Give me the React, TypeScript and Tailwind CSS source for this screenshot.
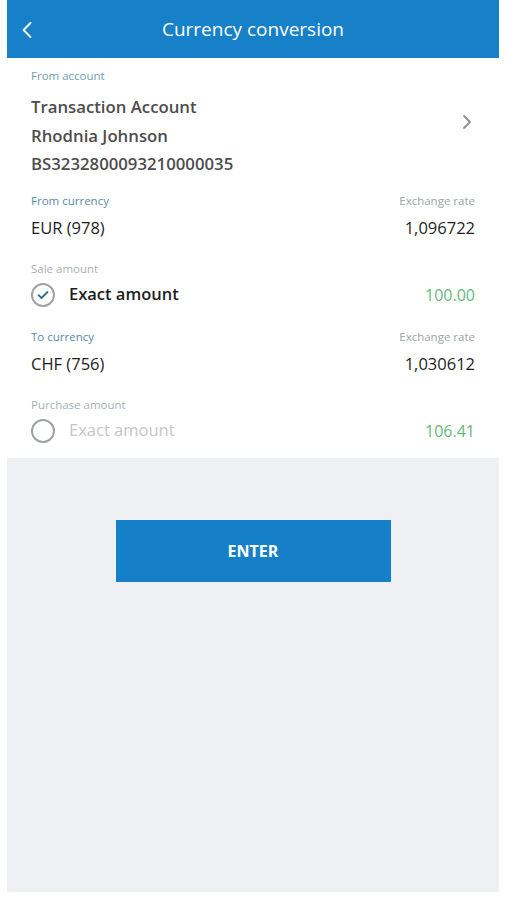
import { ChevronLeft, ChevronRight } from "lucide-react";

function Label({ children, className }: { children: React.ReactNode; className?: string }) {
  return <p className={`text-[11.5px] leading-4 ${className ?? ""}`}>{children}</p>;
}

function CurrencyRow(props: { label: string; value: string; rate: string }) {
  return (
    <div>
      <div className="flex justify-between">
        <Label className="text-[#5b8aa6]">{props.label}</Label>
        <Label className="text-[#9ca5aa]">Exchange rate</Label>
      </div>
      <div className="mt-[7px] flex justify-between text-[16.5px] font-medium leading-6 text-[#1e1e1e]">
        <span>{props.value}</span>
        <span>{props.rate}</span>
      </div>
    </div>
  );
}

function AmountRow(props: { label: string; checked: boolean; amount: string }) {
  return (
    <div>
      <Label className="text-[#a8afb3]">{props.label}</Label>
      <div className="mt-1 flex h-7 items-center justify-between">
        <div className="flex items-center">
          <span className="flex size-6 items-center justify-center rounded-full border-2 border-[#9ea3a8]">
            {props.checked && (
              <svg width="12" height="10" viewBox="0 0 12 10" fill="none">
                <path d="M1.5 5.2 4.5 8 10.5 2" stroke="#2c6c99" strokeWidth="1.8" strokeLinecap="round" strokeLinejoin="round" />
              </svg>
            )}
          </span>
          <span
            className={`ml-[14px] text-[16.5px] ${props.checked ? "font-semibold text-[#1e1e1e]" : "text-[#c3c6c8]"}`}
          >
            Exact amount
          </span>
        </div>
        <span className="text-[16px] text-[#66b877]">{props.amount}</span>
      </div>
    </div>
  );
}

export default function App() {
  return (
    <div className="min-h-[900px] bg-white px-[7px] pb-2 font-['Open_Sans',sans-serif]">
      <div className="flex h-[892px] w-[492px] flex-col">
        <header className="relative flex h-[58px] items-center justify-center bg-[#1680c8] text-white">
          <ChevronLeft className="absolute left-[6px] top-[16px] size-[28px]" strokeWidth={1.6} />
          <h1 className="text-[19px]">Currency conversion</h1>
        </header>

        <section className="bg-white px-6 pb-[13px] pt-[10px]">
          <Label className="text-[#6f9fb0]">From account</Label>
          <div className="mt-[9px] flex items-start justify-between">
            <div className="text-[16.75px] font-semibold leading-[28.5px] text-[#4d4d4d]">
              <p>Transaction Account</p>
              <p>Rhodnia Johnson</p>
              <p>BS3232800093210000035</p>
            </div>
            <ChevronRight className="mr-[-4px] mt-[17px] size-6 text-[#8e8e8e]" strokeWidth={1.8} />
          </div>

          <div className="mt-[14px]">
            <CurrencyRow label="From currency" value="EUR (978)" rate="1,096722" />
          </div>
          <div className="mt-[21px]">
            <AmountRow label="Sale amount" checked amount="100.00" />
          </div>
          <div className="mt-[20px]">
            <CurrencyRow label="To currency" value="CHF (756)" rate="1,030612" />
          </div>
          <div className="mt-[21px]">
            <AmountRow label="Purchase amount" checked={false} amount="106.41" />
          </div>
        </section>

        <div className="flex flex-1 justify-center bg-[#eff0f4] pt-[62px]">
          <button className="h-[62px] w-[275px] bg-[#1580c8] text-[16px] font-bold text-white">ENTER</button>
        </div>
      </div>
    </div>
  );
}
